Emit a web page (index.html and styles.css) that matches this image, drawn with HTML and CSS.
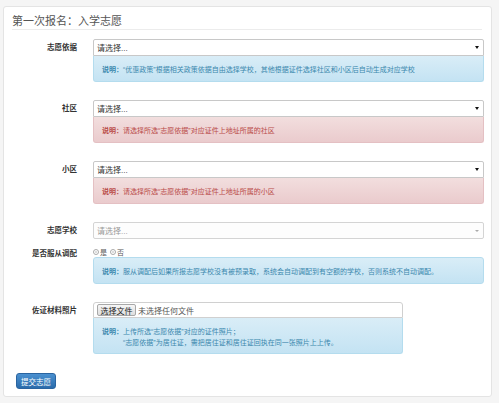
FILE: index.html
```html
<!DOCTYPE html>
<html lang="zh-CN">
<head>
<meta charset="utf-8">
<title>第一次报名：入学志愿</title>
<link rel="stylesheet" href="styles.css">
</head>
<body>
<div class="card">
  <h1 class="title">第一次报名：入学志愿</h1>
  <form class="form">
    <div class="row">
      <div class="label">志愿依据</div>
      <div class="control">
        <div class="select"><span>请选择...</span><i class="caret"></i></div>
        <div class="alert info"><b>说明：</b><span>“优惠政策”根据相关政策依据自由选择学校，其他根据证件选择社区和小区后自动生成对应学校</span></div>
      </div>
    </div>
    <div class="row">
      <div class="label">社区</div>
      <div class="control">
        <div class="select"><span>请选择...</span><i class="caret"></i></div>
        <div class="alert error"><b>说明：</b><span>请选择所选“志愿依据”对应证件上地址所属的社区</span></div>
      </div>
    </div>
    <div class="row">
      <div class="label">小区</div>
      <div class="control">
        <div class="select"><span>请选择...</span><i class="caret"></i></div>
        <div class="alert error"><b>说明：</b><span>请选择所选“志愿依据”对应证件上地址所属的小区</span></div>
      </div>
    </div>
    <div class="row row-tight">
      <div class="label">志愿学校</div>
      <div class="control">
        <div class="select disabled"><span>请选择...</span><i class="caret"></i></div>
      </div>
    </div>
    <div class="row">
      <div class="label label-radio">是否服从调配</div>
      <div class="control">
        <div class="radios"><span class="radio"><i></i>是</span><span class="radio"><i></i>否</span></div>
        <div class="alert info alert-flat"><b>说明：</b><span>服从调配后如果所报志愿学校没有被预录取，系统会自动调配到有空额的学校，否则系统不自动调配。</span></div>
      </div>
    </div>
    <div class="row row-last">
      <div class="label">佐证材料照片</div>
      <div class="control control-narrow">
        <div class="file"><span class="file-btn">选择文件</span><span class="file-name">未选择任何文件</span></div>
        <div class="alert info alert-tall"><b>说明：</b><div class="lines"><div>上传所选“志愿依据”对应的证件照片；</div><div>“志愿依据”为居住证，需把居住证和居住证回执在同一张照片上上传。</div></div></div>
      </div>
    </div>
    <div class="actions"><span class="btn">提交志愿</span></div>
  </form>
</div>
</body>
</html>
```
FILE: styles.css
```css
html, body {
  margin: 0;
  padding: 0;
}
body {
  background: #f5f5f5;
  padding: 6px 0 0 3px;
  font-family: "Liberation Sans", "Noto Sans CJK SC", sans-serif;
  color: #333;
}
.card {
  box-sizing: border-box;
  width: 489px;
  height: 391px;
  background: #fff;
  border: 1px solid #e4e4e4;
  border-radius: 3px;
  padding: 7px 6px 7px 8px;
}
.title {
  margin: 0 3px 9px 0;
  font-size: 11px;
  line-height: 14px;
  font-weight: normal;
  color: #555;
  padding-bottom: 1px;
  border-bottom: 1px solid #ececec;
}
.form {
  display: flex;
  flex-direction: column;
}
.row {
  display: flex;
  gap: 16px;
  margin-bottom: 18px;
}
.row-tight {
  margin-bottom: 8px;
}
.row-last {
  margin-bottom: 19px;
}
.label {
  width: 65px;
  flex: none;
  text-align: right;
  font-size: 7.5px;
  line-height: 17px;
  font-weight: bold;
  color: #333;
}
.label-radio {
  line-height: 13px;
}
.control {
  width: 391px;
  display: flex;
  flex-direction: column;
}
.control-narrow {
  width: 310px;
}
.select {
  box-sizing: border-box;
  height: 17px;
  border: 1px solid #c8c8c8;
  border-radius: 2px 2px 0 0;
  background: #fff;
  display: flex;
  align-items: center;
  justify-content: space-between;
  padding: 0 4px 0 3px;
  font-size: 8px;
  color: #333;
}
.select.disabled {
  color: #999;
  border-color: #d4d4d4;
  border-radius: 2px;
  background: #fdfdfd;
}
.select.disabled .caret {
  border-top-color: #aaa;
  border-top-width: 2px;
}
.caret {
  width: 0;
  height: 0;
  border-left: 2px solid transparent;
  border-right: 2px solid transparent;
  border-top: 3px solid #111;
}
.alert {
  box-sizing: border-box;
  height: 26px;
  display: flex;
  align-items: center;
  padding: 0 8px;
  font-size: 7px;
  border: 1px solid;
  border-top: none;
  border-radius: 0 0 3px 3px;
}
.alert b {
  font-weight: bold;
  flex: none;
}
.alert.info {
  background: linear-gradient(#d9edf7, #c4e3f3);
  border-color: #b4dcee;
  color: #3a87ad;
}
.alert.error {
  background: linear-gradient(#f2dede, #eacbcd);
  border-color: #e4c0c3;
  color: #b94a48;
}
.alert-flat {
  height: 27px;
  border-top: 1px solid #b4dcee;
  border-radius: 3px;
}
.alert-tall {
  height: 36px;
  align-items: flex-start;
  padding-top: 8px;
  line-height: 11px;
}
.radios {
  height: 10px;
  display: flex;
  align-items: center;
  gap: 3px;
  font-size: 7px;
  color: #555;
}
.radio {
  display: inline-flex;
  align-items: center;
  gap: 1px;
}
.radio i {
  box-sizing: border-box;
  width: 6px;
  height: 6px;
  border: 1px solid #aaa;
  border-radius: 50%;
  background: radial-gradient(circle, #ddd 30%, #fff 40%);
}
.file {
  box-sizing: border-box;
  height: 16px;
  border: 1px solid #d0d0d0;
  border-radius: 3px 3px 0 0;
  background: #fff;
  display: flex;
  align-items: center;
  padding-left: 3px;
  gap: 2px;
  font-size: 8px;
}
.file-btn {
  box-sizing: border-box;
  height: 12px;
  width: 39px;
  border: 1px solid #a8a8a8;
  border-radius: 2px;
  background: linear-gradient(#f6f6f6, #dedede);
  display: flex;
  align-items: center;
  justify-content: center;
  color: #222;
}
.file-name {
  color: #555;
}
.lines div {
  white-space: nowrap;
}
.actions {
  display: flex;
  margin-left: 4px;
}
.btn {
  box-sizing: border-box;
  width: 40px;
  height: 16px;
  border-radius: 3px;
  background: linear-gradient(#4a90d0, #2b6cab);
  border: 1px solid #2a64a0;
  color: #fff;
  font-size: 7.5px;
  display: flex;
  align-items: center;
  justify-content: center;
}
```
